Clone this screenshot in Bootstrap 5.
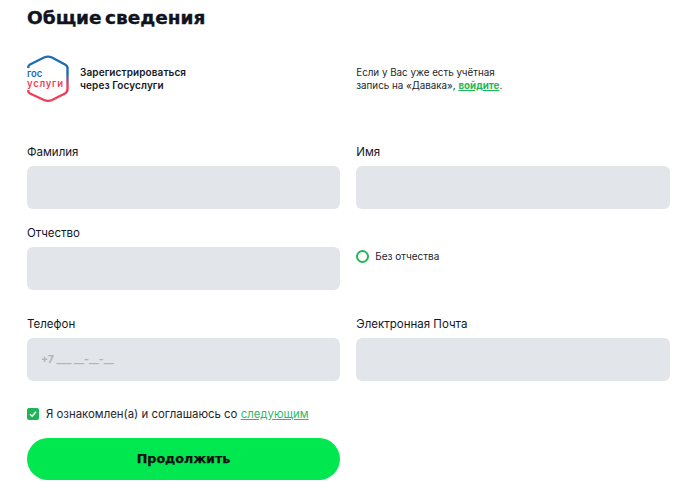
<!DOCTYPE html>
<html lang="ru">
<head>
<meta charset="utf-8">
<title>Общие сведения</title>
<link rel="stylesheet" href="https://cdn.jsdelivr.net/npm/bootstrap@5.3.0/dist/css/bootstrap.min.css">
<style>
html,body{background:#fff;overflow:hidden}
body{font-family:"Inter","Noto Sans",sans-serif;color:#14171f;height:490px}
.page-wrap{padding:5px 24.5px 0 27px}
.page-title{font-family:"DejaVu Sans",sans-serif;font-weight:700;font-size:18.5px;line-height:26px;margin:0 0 23px;color:#0f1420;word-spacing:-3px;-webkit-text-stroke:.35px #0f1420}
.gos-row{height:50px;margin-bottom:41px}
.gos-logo{width:44px;height:48px;flex:none}
.gos-text{font-size:10px;font-weight:600;line-height:13.5px;margin-left:9px;color:#14171f;letter-spacing:.1px}
.login-note{font-size:9.8px;line-height:13.5px;color:#23262d}
.login-note a{color:#1db954;font-weight:700}
.fld-label{font-size:11.5px;line-height:14px;margin-bottom:7px;padding-top:.5px;margin-top:-.5px;font-weight:400;display:block;color:#14171f}
.fld-input.form-control{height:43px;background:#e2e5ea;border:0;border-radius:6px;font-size:10.5px;font-weight:700;padding:0 14px;box-shadow:none}
.fld-input.form-control::placeholder{color:#b0b3b8}
.fld-block{margin-bottom:17px}
.fld-block-b{margin-bottom:27px}
.fld-block-c{margin-bottom:26px}
.radio-ring{width:13px;height:13px;border:2px solid #22b85a;border-radius:50%;flex:none}
.radio-text{font-size:10px;margin-left:6px;color:#23262d}
.radio-cell{height:43px;margin-top:9px}
.tick-box{width:12px;height:12px;border-radius:2px;background:#1fb457;flex:none}
.agree-row{margin-bottom:17px;height:14px}
.agree-text{font-size:11.4px;margin-left:7px;color:#23262d;line-height:14px}
.agree-text a{color:#35b76a}
.go-btn.btn{width:313px;height:42px;border:0;border-radius:21px;background:#00e74f;color:#0c0f14;font-family:"DejaVu Sans",sans-serif;font-weight:700;font-size:12.7px;padding:0;-webkit-text-stroke:.25px #0c0f14}
</style>
</head>
<body>
<div class="page-wrap">
  <h1 class="page-title">Общие сведения</h1>
  <div class="row gx-3 gos-row">
    <div class="col-6 d-flex align-items-center">
      <svg class="gos-logo" viewBox="0 0 44 48" aria-hidden="true">
        <defs><linearGradient id="gosg" gradientUnits="userSpaceOnUse" x1="0" y1="0" x2="0" y2="48"><stop offset=".38" stop-color="#1f6cb5"/><stop offset=".62" stop-color="#ee3f58"/></linearGradient></defs>
        <path d="M1.2 13 V12.5 Q1.2 10.5 3 9.5 L17 2.5 Q21 .8 25 2.5 L38 9.5 Q40.5 10.8 40.5 13 V34 Q40.5 37 38 38.5 L25 45 Q21 46.8 17 45 L3 38.5 Q1.2 37.5 1.2 35.5 V35" fill="none" stroke="url(#gosg)" stroke-width="2.4"/>
        <text x="0" y="22" font-family="Inter,sans-serif" font-size="9.5" font-weight="600" fill="#1f6cb5">гос</text>
        <text x="0" y="31.5" font-family="Inter,sans-serif" font-size="9.5" font-weight="600" fill="#ee3f58" textLength="36">услуги</text>
      </svg>
      <div class="gos-text">Зарегистрироваться<br>через Госуслуги</div>
    </div>
    <div class="col-6 d-flex align-items-center">
      <div class="login-note">Если у Вас уже есть учётная<br>запись на «Давака», <a href="#">войдите</a>.</div>
    </div>
  </div>
  <div class="row gx-3">
    <div class="col-6 fld-block"><label class="fld-label">Фамилия</label><input class="form-control fld-input" type="text"></div>
    <div class="col-6 fld-block"><label class="fld-label">Имя</label><input class="form-control fld-input" type="text"></div>
    <div class="col-6 fld-block-b"><label class="fld-label">Отчество</label><input class="form-control fld-input" type="text"></div>
    <div class="col-6 fld-block-b"><div class="radio-cell d-flex align-items-center"><span class="radio-ring"></span><span class="radio-text">Без отчества</span></div></div>
    <div class="col-6 fld-block-c"><label class="fld-label">Телефон</label><input class="form-control fld-input" type="text" placeholder="+7 ___ __-__-__"></div>
    <div class="col-6 fld-block-c"><label class="fld-label">Электронная Почта</label><input class="form-control fld-input" type="text"></div>
  </div>
  <div class="agree-row d-flex align-items-center">
    <span class="tick-box d-flex align-items-center justify-content-center"><svg width="8" height="8" viewBox="0 0 8 8" aria-hidden="true"><path d="M1 4.2 L3.2 6.2 L7 1.8" fill="none" stroke="#fff" stroke-width="1.4"/></svg></span>
    <span class="agree-text">Я ознакомлен(а) и соглашаюсь со <a href="#">следующим</a></span>
  </div>
  <button class="btn go-btn" type="button">Продолжить</button>
</div>
<script src="https://cdn.jsdelivr.net/npm/bootstrap@5.3.0/dist/js/bootstrap.bundle.min.js"></script>
</body>
</html>
